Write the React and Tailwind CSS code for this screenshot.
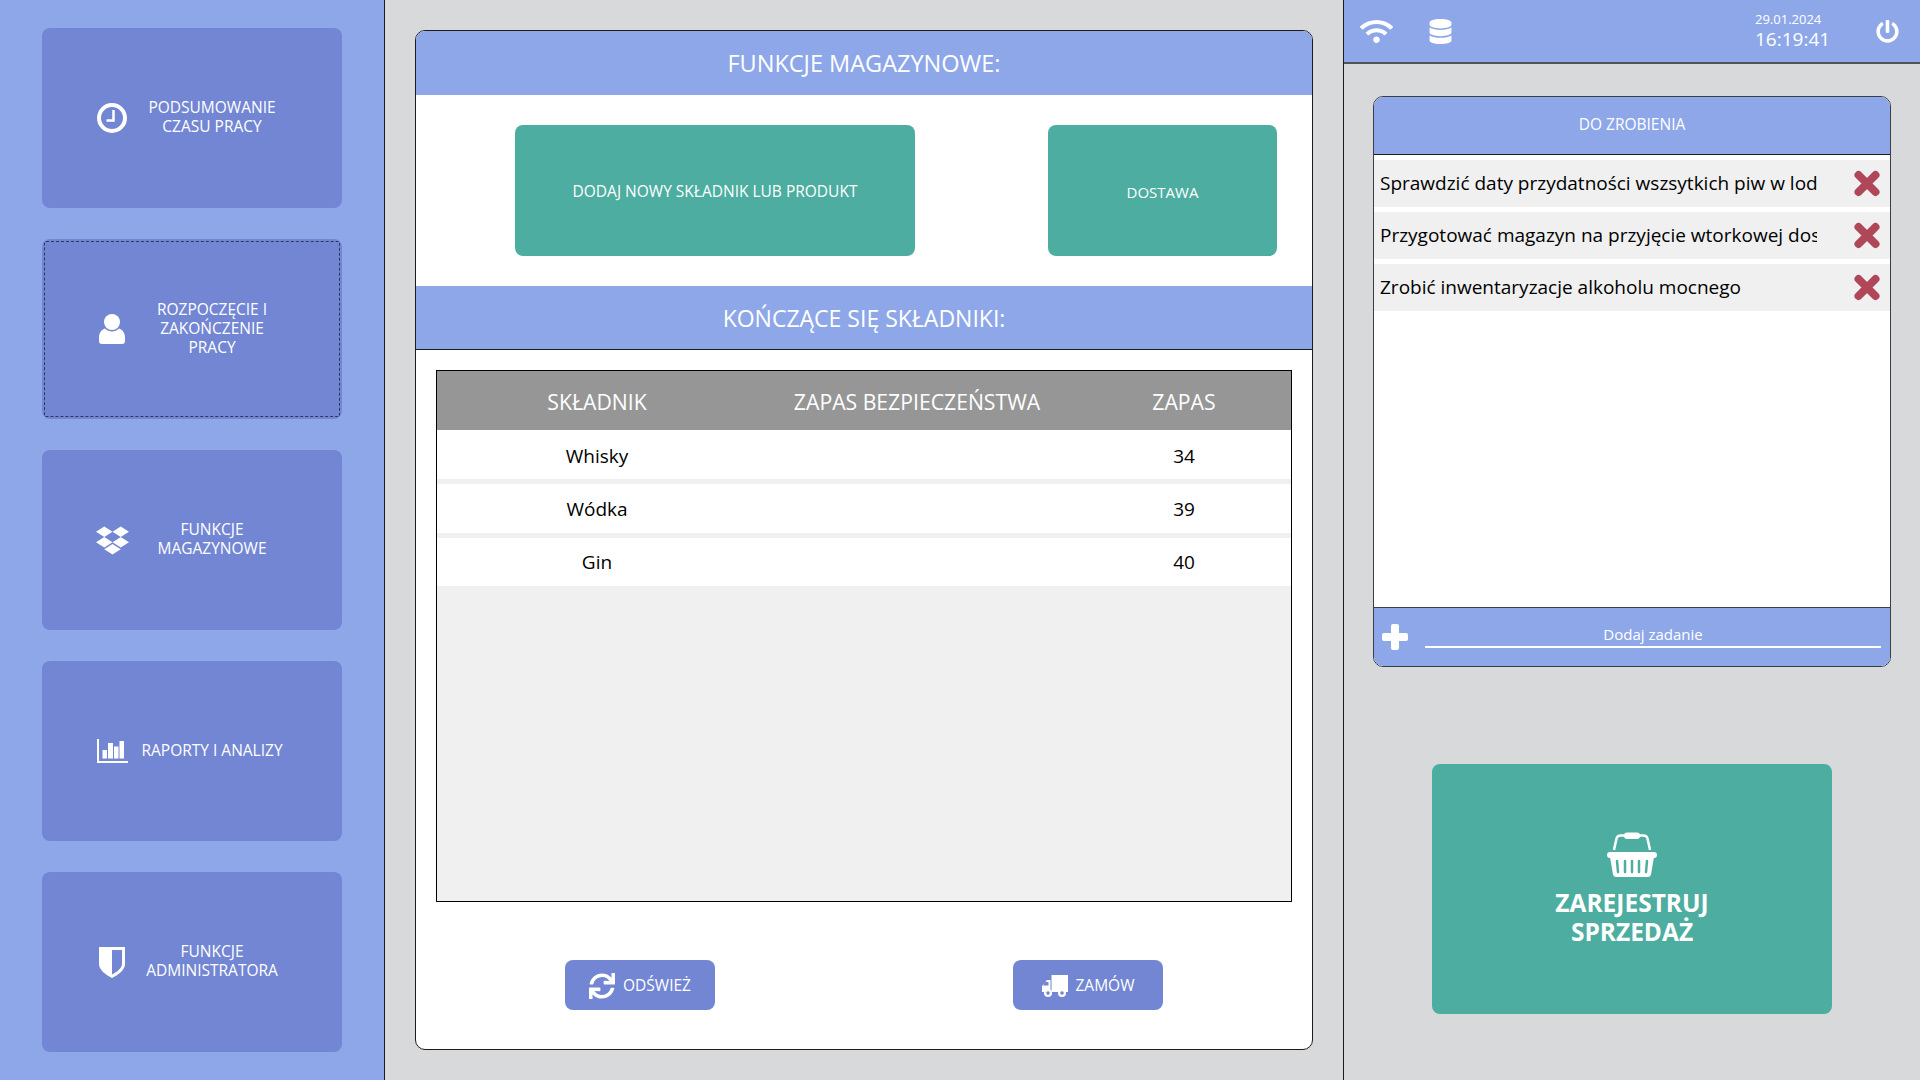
import { FaDropbox, FaWifi, FaDatabase, FaPowerOff, FaSync } from 'react-icons/fa';

const font = { fontFamily: '"Open Sans", "Noto Sans", sans-serif' };

function ClockIcon() {
  return (
    <svg width="30" height="30" viewBox="0 0 30 30" fill="none">
      <circle cx="15" cy="15" r="13" stroke="white" strokeWidth="4" />
      <path d="M16.5 7v10.500H9.500" stroke="white" strokeWidth="2.500" fill="none" />
    </svg>
  );
}
function UserIcon() {
  return (
    <svg width="26" height="30" viewBox="0 0 26 30" fill="white">
      <circle cx="13" cy="8" r="8" />
      <path d="M6 14.500c2 2 4.500 3 7 3s5-1 7-3c3.500 1 6 4.500 6 9v3.500a3 3 0 0 1-3 3H3a3 3 0 0 1-3-3v-3.500c0-4.500 2.500-8 6-9z" />
    </svg>
  );
}
function ChartIcon() {
  return (
    <svg width="31" height="24" viewBox="0 0 31 24" fill="white">
      <path d="M0 0h2v22h29v2H0z" />
      <rect x="5.500" y="11" width="4.500" height="8.500" />
      <rect x="11" y="4" width="5" height="15.500" />
      <rect x="17" y="7.500" width="4.500" height="12" />
      <rect x="22.500" y="2" width="4.500" height="17.500" />
    </svg>
  );
}
function ShieldIcon() {
  return (
    <svg width="26" height="31" viewBox="0 0 26 31" fill="white">
      <path d="M0 0h26v17c0 6-7 11-13 14C7 28 0 23 0 17z" />
      <path d="M13 3h10v14c0 4-5 8-10 10.500z" fill="#7286d3" />
    </svg>
  );
}
function XIcon() {
  return (
    <svg width="26" height="27" viewBox="0 0 26 27" fill="none" stroke="#b04759" strokeWidth="8" strokeLinecap="round">
      <path d="M4.500 5l17 17M21.500 5l-17 17" />
    </svg>
  );
}
function PlusIcon() {
  return (
    <svg width="26" height="26" viewBox="0 0 26 26" fill="white">
      <rect x="9" y="0" width="8" height="26" rx="2" />
      <rect x="0" y="9" width="26" height="8" rx="2" />
    </svg>
  );
}
function BasketIcon() {
  return (
    <svg width="50" height="45" viewBox="0 0 50 45" fill="none">
      <path d="M7 18 9.500 6.500C10 4.500 11.500 3.500 13.500 3.500h23c2 0 3.500 1 4 3L43 18" stroke="white" strokeWidth="2.500" />
      <rect x="17" y="0.500" width="16" height="6.500" rx="3" fill="white" />
      <rect x="0" y="20" width="50" height="6" rx="3" fill="white" />
      <path d="M3 25h44l-3 17.500a3 3 0 0 1-3 2.500H9a3 3 0 0 1-3-2.500z" fill="white" />
      <path d="M10 29l1 11M18 29v11M25 29v11M32 29v11M40 29l-1 11" stroke="#4cada0" strokeWidth="2.500" strokeLinecap="round" />
    </svg>
  );
}
function TruckIcon() {
  return (
    <svg width="26" height="22" viewBox="0 0 26 22" fill="white">
      <path d="M9.500 0H26v17H9.500z" />
      <path d="M8.500 5H5L1 10 0 11v6h8.500z" />
      <circle cx="6" cy="18" r="4" />
      <circle cx="6" cy="18" r="1.800" fill="#7286d3" />
      <circle cx="20" cy="18" r="4" />
      <circle cx="20" cy="18" r="1.800" fill="#7286d3" />
      <path d="M3 7h3.500v3.500H1z" fill="#7286d3" />
    </svg>
  );
}

function NavButton({ icon, lines, selected }) {
  return (
    <div className="relative flex h-[180px] w-[300px] items-center rounded-[8px] bg-[#7286d3] text-white">
      {selected && (
        <div className="absolute inset-[2px] rounded-[2px] border border-dashed border-[#2f3566]" />
      )}
      <div className="flex w-[100px] justify-center pl-[40px]">{icon}</div>
      <div className="flex w-[140px] flex-col items-center pb-[2px] text-center text-[15.5px] leading-[19px]">
        {lines.map((l) => (
          <span key={l} className="whitespace-nowrap">{l}</span>
        ))}
      </div>
    </div>
  );
}

const rows = [
  { n: 'Whisky', v: '34', cls: 'h-[49px] mb-[5px] pt-[3px]' },
  { n: 'Wódka', v: '39', cls: 'h-[49px] mb-[5px] pt-[2px]' },
  { n: 'Gin', v: '40', cls: 'h-[48px] pt-[0px]' },
];
const todos = [
  'Sprawdzić daty przydatności wszsytkich piw w lodówce',
  'Przygotować magazyn na przyjęcie wtorkowej dostawy',
  'Zrobić inwentaryzacje alkoholu mocnego',
];

export default function App() {
  return (
    <div style={font} className="flex h-[1080px] w-[1920px] overflow-hidden bg-[#d8d9db]">
      <aside className="flex h-full w-[385px] shrink-0 flex-col gap-[31px] border-r border-[#1c1c1c] bg-[#8ea7e9] pl-[42px] pt-[28px]">
        <NavButton icon={<ClockIcon />} lines={['PODSUMOWANIE', 'CZASU PRACY']} />
        <NavButton icon={<UserIcon />} lines={['ROZPOCZĘCIE I', 'ZAKOŃCZENIE', 'PRACY']} selected />
        <NavButton icon={<FaDropbox size={33} color="white" />} lines={['FUNKCJE', 'MAGAZYNOWE']} />
        <NavButton icon={<ChartIcon />} lines={['RAPORTY I ANALIZY']} />
        <NavButton icon={<ShieldIcon />} lines={['FUNKCJE', 'ADMINISTRATORA']} />
      </aside>

      <main className="flex w-[958px] shrink-0 flex-col pl-[30px] pt-[30px]">
        <div className="flex h-[1020px] w-[898px] flex-col overflow-hidden rounded-[10px] border border-[#1c1c1c] bg-white">
          <div className="flex h-[64px] shrink-0 items-center justify-center bg-[#8ea7e9] pt-[2px] text-[23.5px] text-white">
            FUNKCJE MAGAZYNOWE:
          </div>
          <div className="flex h-[191px] shrink-0 items-start pl-[99px] pt-[30px]">
            <div className="flex h-[131px] w-[400px] items-center justify-center rounded-[8px] bg-[#4cada0] pt-[3px] text-[15.5px] text-white">
              DODAJ NOWY SKŁADNIK LUB PRODUKT
            </div>
            <div className="ml-[133px] flex h-[131px] w-[229px] items-center justify-center rounded-[8px] bg-[#4cada0] pt-[3px] text-[15px] text-white">
              DOSTAWA
            </div>
          </div>
          <div className="flex h-[64px] shrink-0 items-center justify-center border-b border-[#1c1c1c] bg-[#8ea7e9] pt-[2px] text-[23px] text-white">
            KOŃCZĄCE SIĘ SKŁADNIKI:
          </div>
          <div className="ml-[20px] mt-[20px] flex h-[532px] w-[856px] flex-col border border-black bg-[#f0f0f0]">
            <div className="flex h-[59px] shrink-0 items-center bg-[#969696] pt-[2px] text-[21.2px] text-white">
              <div className="w-[320px] text-center">SKŁADNIK</div>
              <div className="w-[320px] text-center">ZAPAS BEZPIECZEŃSTWA</div>
              <div className="flex-1 text-center">ZAPAS</div>
            </div>
            {rows.map((r) => (
              <div key={r.n} className={`flex shrink-0 items-center bg-white text-[19px] text-black ${r.cls}`}>
                <div className="w-[320px] text-center">{r.n}</div>
                <div className="w-[320px]" />
                <div className="flex-1 text-center">{r.v}</div>
              </div>
            ))}
          </div>
          <div className="flex pl-[149px] pt-[58px]">
            <div className="flex h-[50px] w-[150px] items-center justify-center gap-[8px] rounded-[8px] bg-[#7286d3] pt-[2px] text-[15.5px] text-white">
              <FaSync size={26} color="white" />
              ODŚWIEŻ
            </div>
            <div className="ml-[298px] flex h-[50px] w-[150px] items-center justify-center gap-[8px] rounded-[8px] bg-[#7286d3] pt-[2px] text-[15.5px] text-white">
              <TruckIcon />
              ZAMÓW
            </div>
          </div>
        </div>
      </main>

      <section className="flex flex-1 flex-col border-l border-[#1c1c1c]">
        <div className="flex h-[64px] shrink-0 items-center border-b-2 border-[#4f5459] bg-[#8ea7e9] pl-[16px] text-white">
          <FaWifi size={33} color="white" />
          <div className="ml-[35px]"><FaDatabase size={25} color="white" /></div>
          <div className="ml-[302px] flex w-[90px] flex-col pt-[2px] leading-none">
            <span className="-mt-[2px] text-[13px]">29.01.2024</span>
            <span className="mt-[4px] text-[19px]">16:19:41</span>
          </div>
          <div className="ml-[31px]"><FaPowerOff size={23} color="white" /></div>
        </div>

        <div className="ml-[29px] mt-[32px] flex h-[571px] w-[518px] flex-col overflow-hidden rounded-[10px] border border-[#3a3f46] bg-white">
          <div className="flex h-[58px] shrink-0 items-center justify-center border-b border-[#1c1c1c] bg-[#8ea7e9] pb-[2px] text-[15.5px] text-white">
            DO ZROBIENIA
          </div>
          <div className="flex flex-1 flex-col gap-[5px] pt-[5px]">
            {todos.map((t) => (
              <div key={t} className="flex h-[47px] items-center bg-[#f0f0f0] pl-[6px]">
                <div className="w-[437px] overflow-hidden whitespace-nowrap text-[19px] text-black">{t}</div>
                <div className="ml-[37px]"><XIcon /></div>
              </div>
            ))}
          </div>
          <div className="flex h-[59px] shrink-0 border-t border-[#3a3f46] bg-[#8ea7e9] pl-[8px] pt-[16px] text-white">
            <PlusIcon />
            <div className="ml-[17px] h-[24px] w-[456px] border-b-2 border-white text-center text-[15px] leading-[20px]">
              Dodaj zadanie
            </div>
          </div>
        </div>

        <div className="ml-[88px] mt-[97px] flex h-[250px] w-[400px] flex-col items-center justify-center rounded-[8px] bg-[#4cada0] text-white">
          <BasketIcon />
          <div className="mt-[11px] text-center text-[24.5px] font-bold leading-[29px]">
            ZAREJESTRUJ
            <br />
            SPRZEDAŻ
          </div>
        </div>
      </section>
    </div>
  );
}
